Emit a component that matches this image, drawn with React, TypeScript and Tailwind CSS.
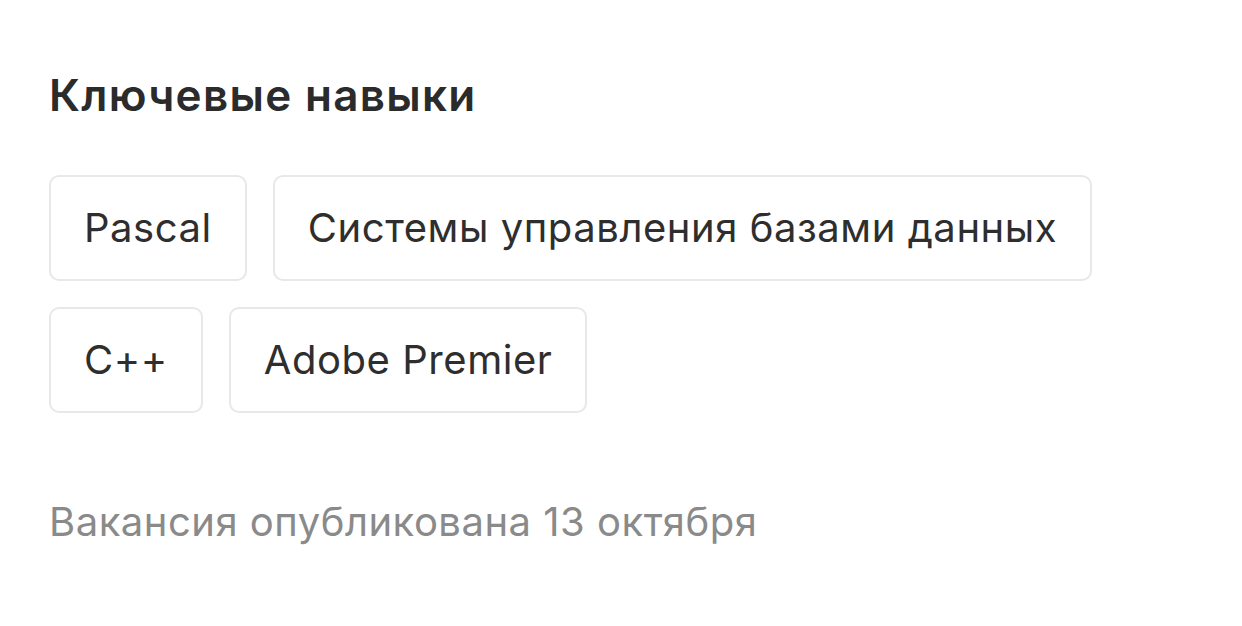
import React from "react";

const skills = ["Pascal", "Системы управления базами данных", "C++", "Adobe Premier"];

export default function App() {
  return (
    <div className="w-[1242px] h-[626px] bg-white overflow-hidden pl-[49px] pt-[70px]" style={{ fontFamily: "Inter, 'Noto Sans', sans-serif" }}>
      <h2 className="text-[44px] leading-[50px] font-semibold text-[#2b2b2b] tracking-[1.3px]">Ключевые навыки</h2>
      <div className="mt-[55px] flex flex-wrap gap-[26px] w-[1100px]">
        {skills.map((s) => (
          <div key={s} className="border-2 border-[#e8e8e8] rounded-[10px] px-[33px] h-[106px] flex items-center text-[40px] tracking-[0.55px] text-[#2e2e2e]">
            {s}
          </div>
        ))}
      </div>
      <p className="mt-[85px] text-[40px] leading-[47px] tracking-[0.5px] text-[#8a8a8a]">Вакансия опубликована 13 октября</p>
    </div>
  );
}
